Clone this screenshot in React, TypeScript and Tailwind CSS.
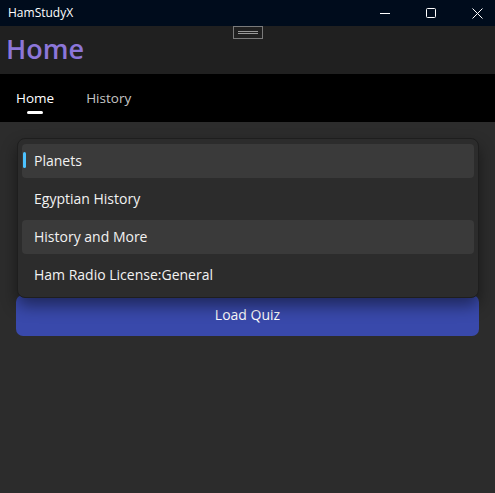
import React from "react";

const quizzes = ["Planets", "Egyptian History", "History and More", "Ham Radio License:General"];

export default function App() {
  const selected = 0;
  const hovered = 2;
  return (
    <div
      className="w-[495px] h-[493px] flex flex-col bg-[#2c2c2c] text-white overflow-hidden"
      style={{ fontFamily: '"Open Sans", "Noto Sans", sans-serif' }}
    >
      {/* title bar */}
      <div className="h-[26px] bg-[#000c1c] flex items-center justify-between shrink-0">
        <span className="pl-2 text-[12px] text-white">HamStudyX</span>
        <div className="flex h-full">
          <div className="w-[46px] flex items-center pl-[23px]">
            <svg width="10" height="10" viewBox="0 0 10 10">
              <path d="M0 5.5h10" stroke="#fff" strokeWidth="1" />
            </svg>
          </div>
          <div className="w-[46px] flex items-center pl-[23px]">
            <svg width="10" height="10" viewBox="0 0 10 10">
              <rect x="0.5" y="0.5" width="9" height="9" rx="1" fill="none" stroke="#fff" strokeWidth="1" />
            </svg>
          </div>
          <div className="w-[46px] flex items-center pl-[23px]">
            <svg width="11" height="11" viewBox="0 0 11 11">
              <path d="M0.5 0.5l10 10M10.5 0.5l-10 10" stroke="#fff" strokeWidth="1" />
            </svg>
          </div>
        </div>
      </div>

      {/* page header */}
      <div className="relative h-[48px] bg-[#202020] shrink-0 flex items-center px-[6px]">
        <h1 className="text-[27px] leading-none font-semibold text-[#8c76d9] -mt-[4px]">Home</h1>
        <div className="absolute left-[233px] top-0 w-[30px] h-[13px] border border-[#7a7a7a] flex flex-col items-center justify-center gap-[1px]">
          <div className="w-[20px] h-px bg-[#9a9a9a]" />
          <div className="w-[20px] h-px bg-[#9a9a9a]" />
        </div>
      </div>

      {/* tabs */}
      <div className="h-[48px] bg-black shrink-0 flex items-center px-4 gap-[32px]">
        <div className="relative text-[13.5px] text-white">
          Home
          <div className="absolute left-[11px] top-[23px] w-[16px] h-[3px] rounded-full bg-white" />
        </div>
        <div className="text-[13.5px] text-[#c5c5c5]">History</div>
      </div>

      {/* content */}
      <div className="relative flex-1 px-4 pt-[173px]">
        <button className="w-full h-[41px] rounded-[7px] bg-[#3949ab] text-[14px] text-white pb-[2px]">
          Load Quiz
        </button>

        <div className="absolute left-[17px] top-[16px] w-[462px] rounded-[8px] border border-[#1e1e1e] bg-[#2c2c2c] shadow-[0_8px_16px_rgba(0,0,0,0.45)] px-[4px] py-[5px] flex flex-col gap-[4px]">
          {quizzes.map((q, i) => (
            <div
              key={q}
              className={`relative h-[34px] rounded-[4px] flex items-center pl-[12px] pb-[2px] text-[14px] text-[#f2f2f2] ${
                i === selected || i === hovered ? "bg-[#3a3a3a]" : ""
              }`}
            >
              {i === selected && (
                <div className="absolute left-[1px] top-[8px] w-[3px] h-[16px] rounded-full bg-[#4cc2ff]" />
              )}
              {q}
            </div>
          ))}
        </div>
      </div>
    </div>
  );
}
